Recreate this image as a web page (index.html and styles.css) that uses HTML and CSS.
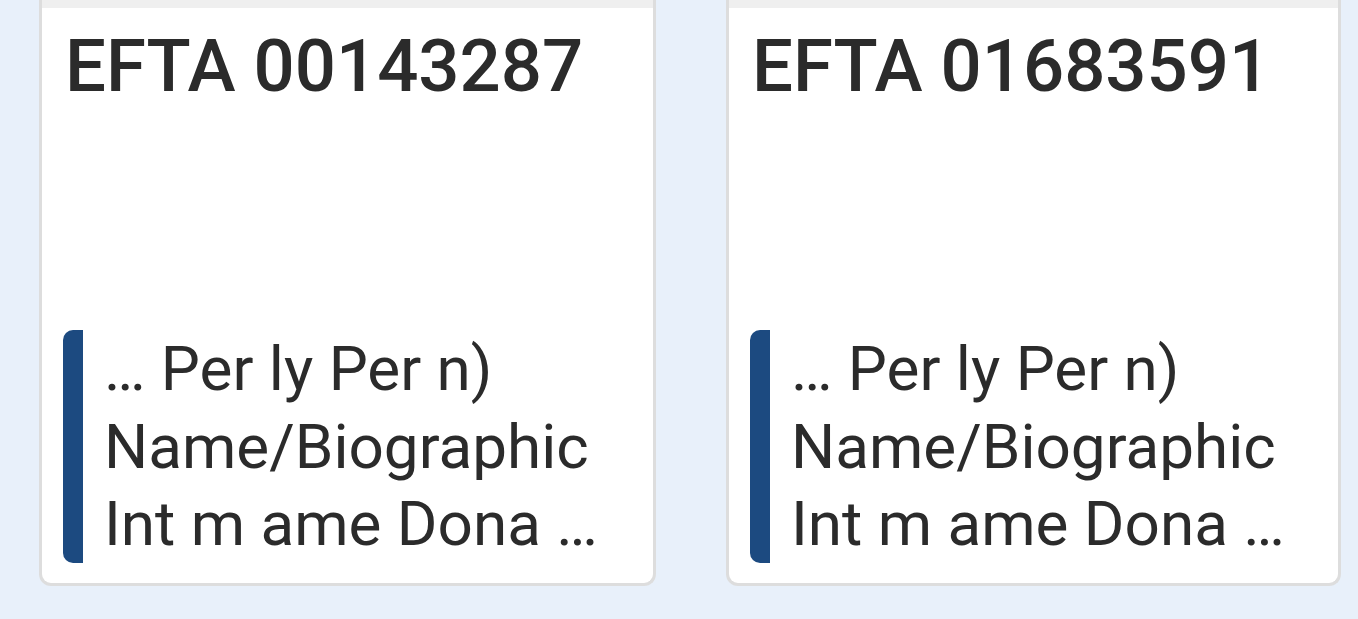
FILE: index.html
```html
<!DOCTYPE html>
<html lang="en">
<head>
<meta charset="utf-8">
<title>EFTA documents</title>
<link rel="stylesheet" href="styles.css">
</head>
<body>
<main class="grid">
  <article class="card">
    <div class="thumb"></div>
    <div class="body">
      <h2 class="title">EFTA 00143287</h2>
      <blockquote class="snippet">… Per ly Per n) Name/Biographic Int m ame Dona …</blockquote>
    </div>
  </article>
  <article class="card">
    <div class="thumb"></div>
    <div class="body">
      <h2 class="title">EFTA 01683591</h2>
      <blockquote class="snippet">… Per ly Per n) Name/Biographic Int m ame Dona …</blockquote>
    </div>
  </article>
</main>
</body>
</html>
```
FILE: styles.css
```css
html, body {
  margin: 0;
  padding: 0;
  background: #e8f0fa;
  font-family: Roboto, "Noto Sans", sans-serif;
  color: #2b2b2b;
  overflow: hidden;
}

.grid {
  display: flex;
  gap: 70px;
  padding-left: 39px;
}

.card {
  box-sizing: border-box;
  width: 617px;
  height: 586px;
  background: #ffffff;
  border: 3px solid #dddddd;
  border-top: none;
  border-radius: 0 0 12px 12px;
  display: flex;
  flex-direction: column;
}

.card + .card {
  width: 615px;
}

.thumb {
  height: 8px;
  background: #efefef;
}

.body {
  flex: 1;
  display: flex;
  flex-direction: column;
  padding: 16px 21px 20px;
}

.title {
  margin: 0 0 0 2px;
  font-size: 72.5px;
  line-height: 86px;
  font-weight: 500;
  color: #2b2b2b;
  white-space: nowrap;
}

.snippet {
  margin: auto 0 0;
  border-left: 20px solid #1c4a80;
  border-radius: 10px;
  padding-left: 21px;
  font-size: 62px;
  line-height: 77.6px;
  color: #2b2b2b;
  width: 500px;
}
```
